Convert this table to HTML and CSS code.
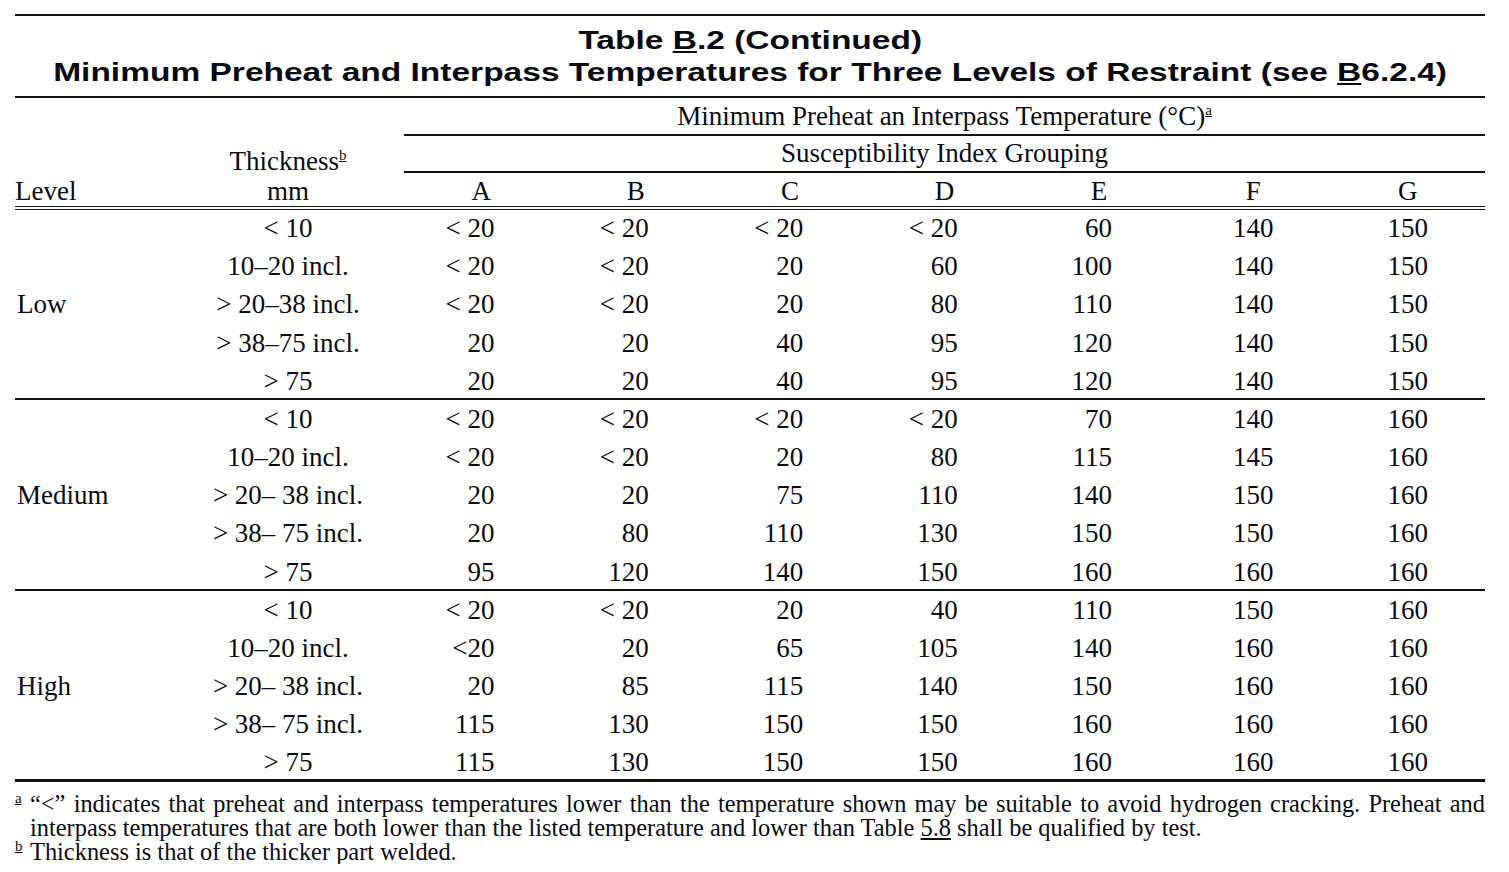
FILE: index.html
```html
<!DOCTYPE html>
<html lang="en">
<head>
<meta charset="utf-8">
<title>Table B.2 (Continued)</title>
<link rel="stylesheet" href="styles.css">
</head>
<body>
<div class="doc">
  <header class="title">
    <div class="tline"><span class="tscale">Table <u>B</u>.2 (Continued)</span></div>
    <div class="tline"><span class="tscale">Minimum Preheat and Interpass Temperatures for Three Levels of Restraint (see <u>B</u>6.2.4)</span></div>
  </header>
  <table class="grid">
    <colgroup>
      <col class="c-level"><col class="c-thick">
      <col class="c-data"><col class="c-data"><col class="c-data"><col class="c-data"><col class="c-data"><col class="c-data"><col class="c-data">
    </colgroup>
    <thead>
      <tr class="h1">
        <th class="lvl-h" rowspan="3"><div class="stack"><span>Level</span></div></th>
        <th class="thk-h" rowspan="3"><div class="stack"><span>Thickness<sup><u>b</u></sup></span><span>mm</span></div></th>
        <th class="span-h" colspan="7">Minimum Preheat an Interpass Temperature (°C)<sup><u>a</u></sup></th>
      </tr>
      <tr class="h2">
        <th class="span-h" colspan="7">Susceptibility Index Grouping</th>
      </tr>
      <tr class="h3">
        <th>A</th><th>B</th><th>C</th><th>D</th><th>E</th><th>F</th><th>G</th>
      </tr>
    </thead>
    <tbody class="grp">
      <tr><td class="lvl" rowspan="5">Low</td><td class="thk">&lt; 10</td><td class="r">&lt; 20</td><td class="r">&lt; 20</td><td class="r">&lt; 20</td><td class="r">&lt; 20</td><td class="r">60</td><td class="c">140</td><td class="c">150</td></tr>
      <tr><td class="thk">10–20 incl.</td><td class="r">&lt; 20</td><td class="r">&lt; 20</td><td class="r">20</td><td class="r">60</td><td class="r">100</td><td class="c">140</td><td class="c">150</td></tr>
      <tr><td class="thk">&gt; 20–38 incl.</td><td class="r">&lt; 20</td><td class="r">&lt; 20</td><td class="r">20</td><td class="r">80</td><td class="r">110</td><td class="c">140</td><td class="c">150</td></tr>
      <tr><td class="thk">&gt; 38–75 incl.</td><td class="r">20</td><td class="r">20</td><td class="r">40</td><td class="r">95</td><td class="r">120</td><td class="c">140</td><td class="c">150</td></tr>
      <tr><td class="thk">&gt; 75</td><td class="r">20</td><td class="r">20</td><td class="r">40</td><td class="r">95</td><td class="r">120</td><td class="c">140</td><td class="c">150</td></tr>
    </tbody>
    <tbody class="grp">
      <tr><td class="lvl" rowspan="5">Medium</td><td class="thk">&lt; 10</td><td class="r">&lt; 20</td><td class="r">&lt; 20</td><td class="r">&lt; 20</td><td class="r">&lt; 20</td><td class="r">70</td><td class="c">140</td><td class="c">160</td></tr>
      <tr><td class="thk">10–20 incl.</td><td class="r">&lt; 20</td><td class="r">&lt; 20</td><td class="r">20</td><td class="r">80</td><td class="r">115</td><td class="c">145</td><td class="c">160</td></tr>
      <tr><td class="thk">&gt; 20– 38 incl.</td><td class="r">20</td><td class="r">20</td><td class="r">75</td><td class="r">110</td><td class="r">140</td><td class="c">150</td><td class="c">160</td></tr>
      <tr><td class="thk">&gt; 38– 75 incl.</td><td class="r">20</td><td class="r">80</td><td class="r">110</td><td class="r">130</td><td class="r">150</td><td class="c">150</td><td class="c">160</td></tr>
      <tr><td class="thk">&gt; 75</td><td class="r">95</td><td class="r">120</td><td class="r">140</td><td class="r">150</td><td class="r">160</td><td class="c">160</td><td class="c">160</td></tr>
    </tbody>
    <tbody class="grp">
      <tr><td class="lvl" rowspan="5">High</td><td class="thk">&lt; 10</td><td class="r">&lt; 20</td><td class="r">&lt; 20</td><td class="r">20</td><td class="r">40</td><td class="r">110</td><td class="c">150</td><td class="c">160</td></tr>
      <tr><td class="thk">10–20 incl.</td><td class="r">&lt;20</td><td class="r">20</td><td class="r">65</td><td class="r">105</td><td class="r">140</td><td class="c">160</td><td class="c">160</td></tr>
      <tr><td class="thk">&gt; 20– 38 incl.</td><td class="r">20</td><td class="r">85</td><td class="r">115</td><td class="r">140</td><td class="r">150</td><td class="c">160</td><td class="c">160</td></tr>
      <tr><td class="thk">&gt; 38– 75 incl.</td><td class="r">115</td><td class="r">130</td><td class="r">150</td><td class="r">150</td><td class="r">160</td><td class="c">160</td><td class="c">160</td></tr>
      <tr><td class="thk">&gt; 75</td><td class="r">115</td><td class="r">130</td><td class="r">150</td><td class="r">150</td><td class="r">160</td><td class="c">160</td><td class="c">160</td></tr>
    </tbody>
  </table>
  <div class="notes">
    <p class="note"><sup class="fn"><u>a</u></sup><span class="first">“&lt;” indicates that preheat and interpass temperatures lower than the temperature shown may be suitable to avoid hydrogen cracking. Preheat and</span><span class="rest">interpass temperatures that are both lower than the listed temperature and lower than Table <u>5.8</u> shall be qualified by test.</span></p>
    <p class="note"><sup class="fn"><u>b</u></sup><span class="rest">Thickness is that of the thicker part welded.</span></p>
  </div>
</div>
</body>
</html>
```

FILE: styles.css
```css
html, body {
  margin: 0;
  padding: 0;
  background: #ffffff;
}

body {
  color: #0a0a12;
  font-family: "Liberation Serif", "Times New Roman", serif;
}

.doc {
  width: 1470px;
  margin: 14px 0 0 15px;
}

.title {
  border-top: 2px solid #111;
  border-bottom: 2px solid #111;
  padding: 8px 0 8px;
  text-align: center;
  font-family: "Liberation Sans", Arial, sans-serif;
  font-weight: bold;
  font-size: 25px;
  line-height: 32px;
}

.tline {
  height: 32px;
}

.tscale {
  display: inline-block;
  transform: scaleX(1.34);
  transform-origin: center;
}

.grid {
  width: 1470px;
  border-collapse: collapse;
  table-layout: fixed;
  font-size: 27px;
}

.c-level { width: 157px; }
.c-thick { width: 232px; }
.c-data { width: 154.43px; }

.grid th, .grid td {
  padding: 0;
  font-weight: normal;
  white-space: nowrap;
}

.grid sup {
  font-size: 15px;
  vertical-align: 10px;
  line-height: 0;
}

.h1 th { height: 36px; }
.h2 th { height: 35px; }

.span-h {
  text-align: center;
  border-bottom: 2px solid #111;
  line-height: 35px;
}

.h1 .span-h {
  line-height: 34px;
}

.h3 th {
  height: 33px;
  text-align: center;
  vertical-align: bottom;
  line-height: 30px;
  padding-bottom: 0;
  border-bottom: 4px double #111;
}

.lvl-h, .thk-h {
  vertical-align: bottom;
  border-bottom: 4px double #111;
}

.stack {
  display: flex;
  flex-direction: column;
  justify-content: flex-end;
  line-height: 30px;
  padding-bottom: 0;
}

.lvl-h .stack { align-items: flex-start; }
.thk-h .stack { align-items: center; }

/* body rows: 38.2px pitch for the figures */
.grid td {
  height: 34px;
  line-height: 34px;
  padding-top: 1px;
  padding-bottom: 3.2px;
}

.grp tr:last-child td {
  padding-bottom: 0;
}

.grp + .grp tr:first-child td {
  border-top: 2px solid #111;
  padding-top: 2px;
}

.grp:last-child tr:last-child td,
.grp:last-child td.lvl {
  border-bottom: 3px solid #111;
}

.grid td.lvl {
  text-align: left;
  vertical-align: middle;
  padding: 0 0 0 2px;
}

.thk { text-align: center; }

.r {
  text-align: right;
  padding-right: 64px !important;
}

.c { text-align: center; }

.notes {
  padding-top: 10px;
  font-size: 24.4px;
  line-height: 24px;
}

.note {
  margin: 0;
  position: relative;
  padding-left: 15px;
}

.fn {
  position: absolute;
  left: 0;
  top: -1px;
  font-size: 15px;
  line-height: 15px;
}

.first {
  display: block;
  text-align: justify;
  text-align-last: justify;
}

.rest {
  display: block;
}
```
